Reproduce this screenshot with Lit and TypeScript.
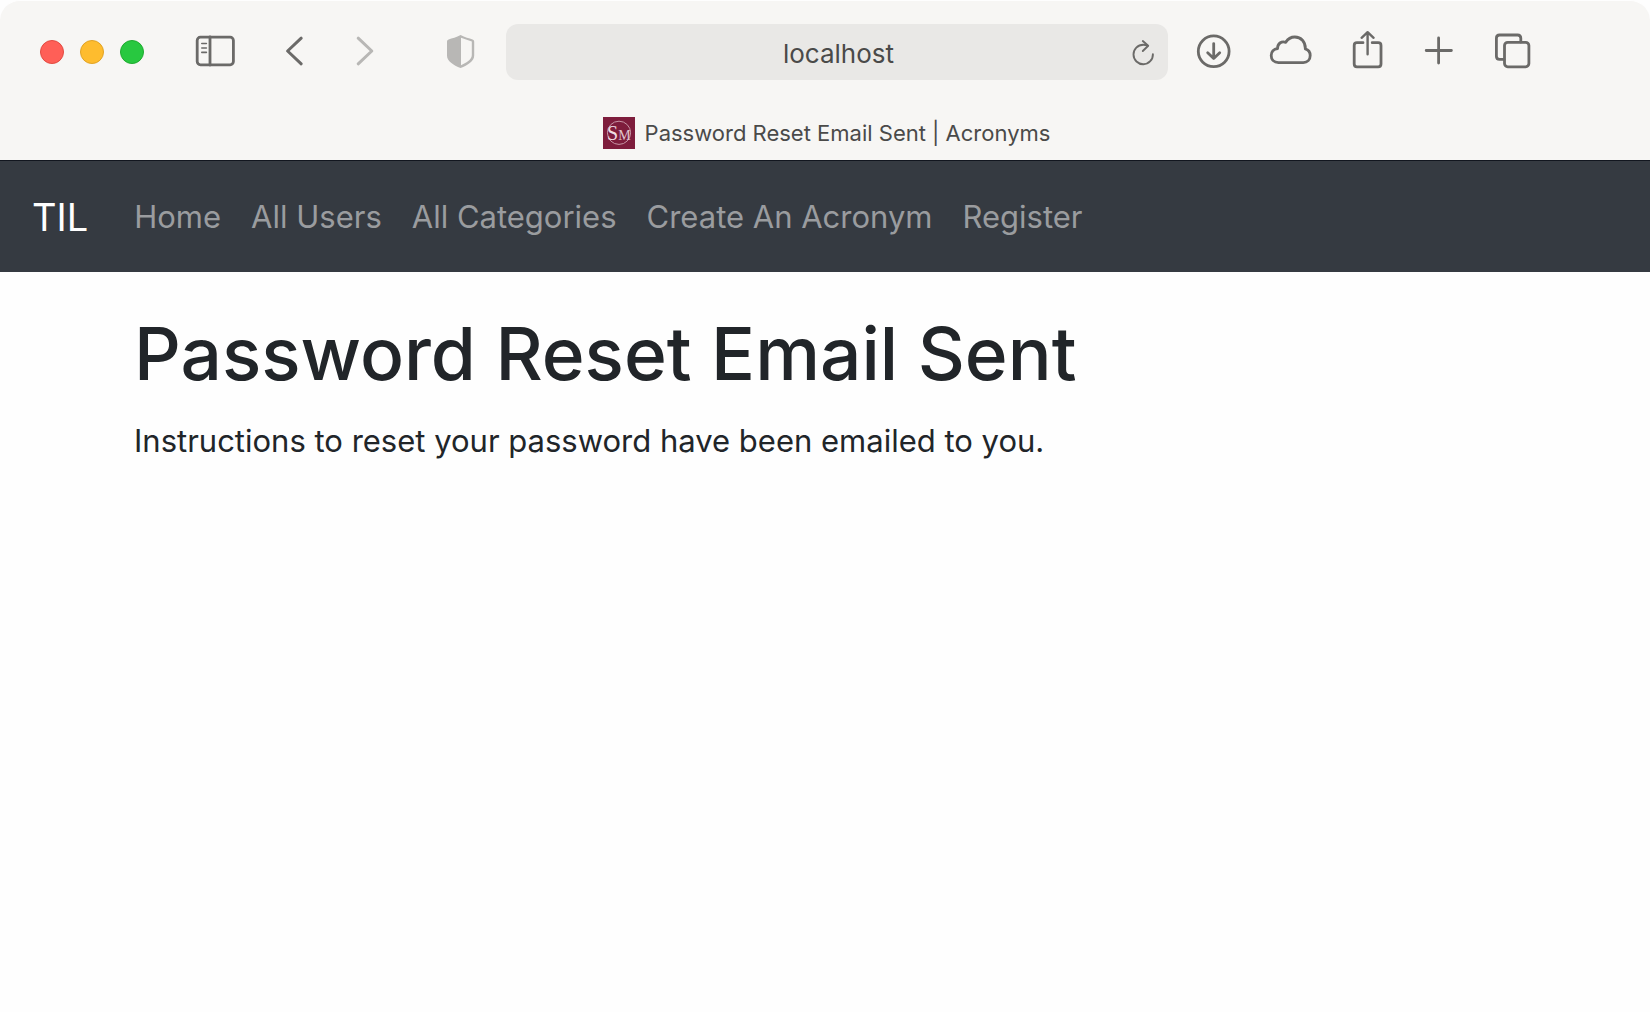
import { LitElement, html, css, svg } from "lit";
import { customElement } from "lit/decorators.js";

const icons = {
  sidebar: svg`<rect x="2.2" y="5.2" width="36.2" height="27.6" rx="3.2"/><path d="M15 5V33"/><path d="M6.8 11.5H11.4M6.8 16H11.4M6.8 20.4H11.4" stroke-width="1.6"/>`,
  back: svg`<path d="M27.2 6.2L13.6 19L27.2 31.8" stroke-width="3"/>`,
  forward: svg`<path d="M13.2 6.2L26.8 19L13.2 31.8" stroke-width="3"/>`,
  shield: svg`<path fill="currentColor" stroke="none" fill-rule="evenodd" d="M20.6 3C16.5 5.2 12 6.4 8.6 7.4Q7 8 7 9.6V23.4C7 29.4 13.4 32.8 20.6 36C27.8 32.8 34.2 29.4 34.2 23.4V9.6Q34.2 8 32.6 7.4C29.2 6.4 24.7 5.2 20.6 3ZM21 5.8L31.8 9.6V23C31.8 27.8 26 31 21 33.2Z"/>`,
  download: svg`<circle cx="19.7" cy="19.3" r="15.4"/><path d="M19.7 11.6V26.4M13.7 20.8L19.7 26.6L25.7 20.8"/>`,
  share: svg`<path d="M15 10.7H9Q6.2 10.7 6.2 13.5V32Q6.2 34.8 9 34.8H30.2Q33 34.8 33 32V13.5Q33 10.7 30.2 10.7H24.2"/><path d="M19.6 22.2V0.8M13.6 5.8L19.6 0.2L25.6 5.8" stroke-width="2.4"/>`,
  tabs: svg`<path d="M27.8 10V6.2Q27.8 3 24.6 3H6.6Q3.4 3 3.4 6.2V24.2Q3.4 27.4 6.6 27.4H11"/><rect x="11.5" y="10.4" width="24.4" height="24.4" rx="3.2"/>`,
};

const links = ["Home", "All Users", "All Categories", "Create An Acronym", "Register"];

@customElement("app-root")
export class AppRoot extends LitElement {
  static styles = css`
    :host {
      display: block;
      min-height: 100vh;
      background: #fefefe;
      font-family: Inter, "Liberation Sans", sans-serif;
      color: #212529;
    }
    .chrome {
      border-top: 1px solid #fefefe;
      background: #f7f6f4;
      border-radius: 20px 20px 0 0;
    }
    .toolbar {
      display: flex;
      align-items: center;
      height: 102px;
      padding: 0 117px 0 40px;
    }
    button {
      display: flex;
      flex: none;
      padding: 0;
      border: 0;
      background: none;
      color: #6b6a68;
      cursor: pointer;
    }
    button:disabled,
    .shield {
      color: #b8b7b5;
    }
    .icon {
      display: block;
      fill: none;
      stroke: currentColor;
      stroke-width: 2.8;
      stroke-linecap: round;
      stroke-linejoin: round;
      overflow: visible;
    }
    .lights {
      display: flex;
      gap: 16px;
      margin-right: 51px;
    }
    .light {
      box-sizing: border-box;
      width: 24px;
      height: 24px;
      border-radius: 50%;
      border: 1px solid #e24b41;
      background: #ff5f57;
    }
    .light.min {
      border-color: #e1a325;
      background: #febc2e;
    }
    .light.max {
      border-color: #1fab2f;
      background: #28c840;
    }
    .nav-buttons {
      display: flex;
      gap: 31px;
      margin: 0 55px 0 39px;
    }
    .address {
      display: flex;
      flex: 1;
      align-items: center;
      min-width: 0;
      height: 56px;
      margin: 0 26px;
      padding: 0 13px 0 40px;
      box-sizing: border-box;
      border-radius: 12px;
      background: #e9e8e6;
    }
    .address input {
      flex: 1;
      min-width: 0;
      padding: 4px 0 0;
      border: 0;
      outline: 0;
      background: none;
      font: 400 26px/32px Inter, "Liberation Sans", sans-serif;
      color: #4a4a49;
      text-align: center;
    }
    .actions {
      display: flex;
      gap: 35px;
    }
    .tab {
      display: flex;
      align-items: center;
      justify-content: center;
      gap: 10px;
      padding: 14px 0 11px 3px;
      font-size: 22px;
      line-height: 32px;
      color: #4a4a49;
    }
    .favicon {
      display: block;
      font-family: "Liberation Serif", serif;
    }
    .navbar {
      display: flex;
      align-items: center;
      gap: 46px;
      box-sizing: border-box;
      min-height: 112px;
      padding: 0 32px;
      border-top: 1px solid #12161f;
      background: #353a41;
    }
    a {
      text-decoration: none;
    }
    .brand {
      font-size: 38px;
      line-height: 48px;
      color: #ffffff;
    }
    .links {
      display: flex;
      flex-wrap: wrap;
      gap: 0 30px;
      margin: 0;
      padding: 0;
      list-style: none;
      font-size: 31px;
      line-height: 48px;
    }
    .links a {
      color: #9a9c9f;
    }
    main {
      padding: 38px 134px;
    }
    h1 {
      margin: 0 0 19px;
      font-size: 73px;
      font-weight: 550;
      line-height: 88px;
    }
    p {
      margin: 0;
      font-size: 31px;
      line-height: 48px;
    }
  `;

  private icon(name: keyof typeof icons) {
    return html`<svg class="icon" width="40" height="40" viewBox="0 0 40 40" aria-hidden="true">${icons[name]}</svg>`;
  }

  render() {
    return html`
      <header class="chrome">
        <div class="toolbar">
          <div class="lights">
            <button class="light" aria-label="Close"></button>
            <button class="light min" aria-label="Minimize"></button>
            <button class="light max" aria-label="Zoom"></button>
          </div>
          <button aria-label="Sidebar">${this.icon("sidebar")}</button>
          <div class="nav-buttons">
            <button aria-label="Back">${this.icon("back")}</button>
            <button aria-label="Forward" disabled>${this.icon("forward")}</button>
          </div>
          <button class="shield" aria-label="Privacy report">${this.icon("shield")}</button>
          <div class="address">
            <input type="text" aria-label="Address" value="localhost" />
            <button aria-label="Reload">
              <svg class="icon" width="24" height="28" viewBox="0 0 24 28" aria-hidden="true">
                <g stroke-width="1.9">
                  <path d="M16.6 7.6Q14.4 6.8 12.2 6.8A9.7 9.7 0 1 0 21.9 16.2" />
                  <path d="M11.8 3L17.2 7.7L11.8 13" />
                </g>
              </svg>
            </button>
          </div>
          <div class="actions">
            <button aria-label="Downloads">${this.icon("download")}</button>
            <button aria-label="iCloud tabs">
              <svg class="icon" width="44" height="40" viewBox="0 0 44 40" aria-hidden="true">
                <path d="M9.5 30.6C5 30.6 2.2 27.6 2.2 23.5C2.2 19.7 4.8 17 8.6 16.5C8.4 11.6 12.4 8.8 16.8 10.3C18.8 7 22 5 25.8 5C32 5 36.6 9.8 36.3 16.9C39.4 17.8 41.2 20.2 41.2 23.5C41.2 27.6 38.4 30.6 34.3 30.6Z" />
              </svg>
            </button>
            <button aria-label="Share">${this.icon("share")}</button>
            <button aria-label="New tab">
              <svg class="icon" width="35" height="40" viewBox="5 0 35 40" aria-hidden="true">
                <path d="M8.2 18.5H33.4M20.6 6V31" />
              </svg>
            </button>
            <button aria-label="Tab overview">${this.icon("tabs")}</button>
          </div>
        </div>
        <div class="tab">
          <svg class="favicon" width="32" height="32" viewBox="0 0 32 32" aria-hidden="true">
            <rect width="32" height="32" fill="#7e1d3c" />
            <circle cx="16" cy="15.8" r="11.6" fill="none" stroke="#c795a5" stroke-width="1" />
            <text x="4" y="22.5" font-size="20" fill="#f0dfe4">S<tspan font-size="14" fill="#dfc3cc">M</tspan></text>
          </svg>
          <span>Password Reset Email Sent | Acronyms</span>
        </div>
      </header>
      <nav class="navbar">
        <a class="brand" href="#">TIL</a>
        <ul class="links">
          ${links.map((l) => html`<li><a href="#">${l}</a></li>`)}
        </ul>
      </nav>
      <main>
        <h1>Password Reset Email Sent</h1>
        <p>Instructions to reset your password have been emailed to you.</p>
      </main>
    `;
  }
}
